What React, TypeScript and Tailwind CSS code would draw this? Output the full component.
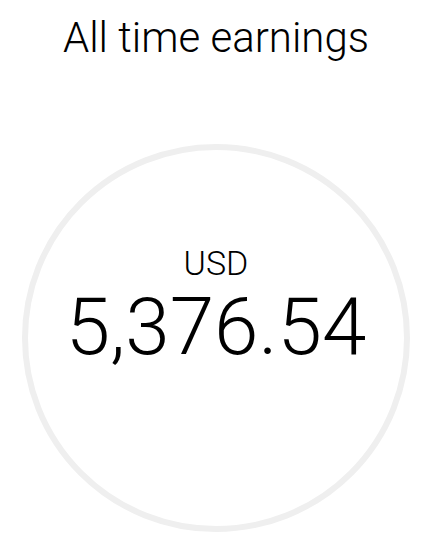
export default function App() {
  return (
    <div className="min-h-[554px] bg-white" style={{ fontFamily: 'Roboto, "Liberation Sans", sans-serif' }}>
      <div className="w-[432px] flex flex-col items-center pt-[17px]">
        <h1 className="text-[42px] leading-none font-light text-black">All time earnings</h1>
        <div className="mt-[85px] w-[388px] h-[388px] rounded-full border-[6px] border-[#efefef] flex flex-col items-center pt-[96px]">
          <div className="text-[34px] leading-none font-light text-black">USD</div>
          <div className="mt-[7px] text-[80px] leading-none font-light text-black">5,376.54</div>
        </div>
      </div>
    </div>
  );
}
